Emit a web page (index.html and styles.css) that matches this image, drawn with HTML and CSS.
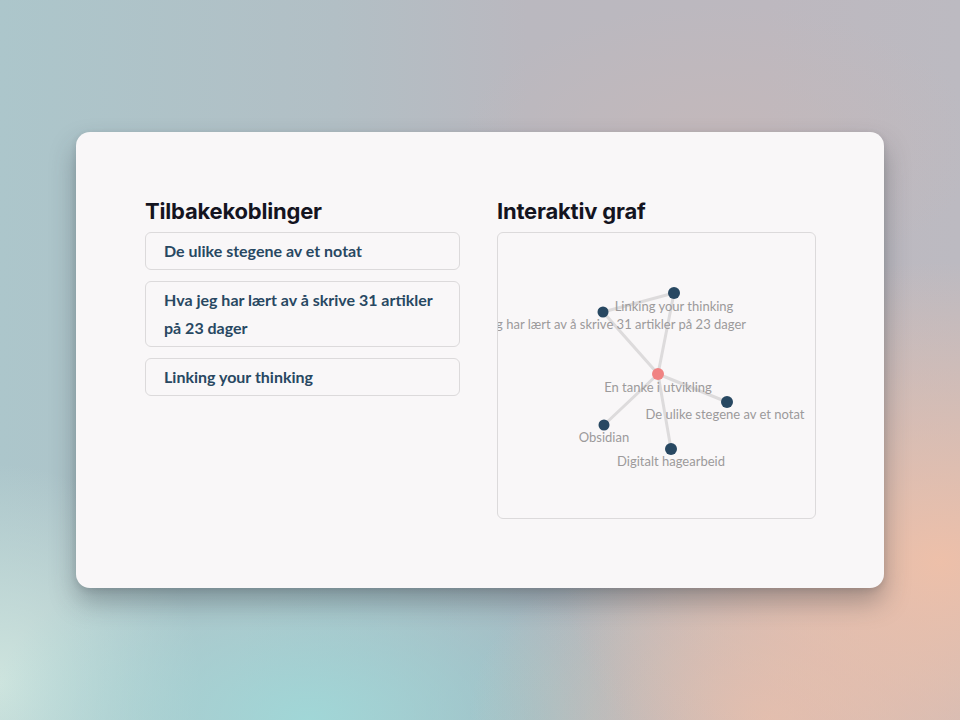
FILE: index.html
```html
<!DOCTYPE html>
<html lang="no">
<head>
<meta charset="utf-8">
<title>Tilbakekoblinger</title>
<link rel="stylesheet" href="styles.css">
</head>
<body>
<div class="stage">
  <div class="card">
    <section class="col">
      <h2 class="title">Tilbakekoblinger</h2>
      <ul class="links">
        <li class="link">De ulike stegene av et notat</li>
        <li class="link">Hva jeg har lært av å skrive 31 artikler på 23 dager</li>
        <li class="link">Linking your thinking</li>
      </ul>
    </section>
    <section class="col">
      <h2 class="title">Interaktiv graf</h2>
      <div class="graph">
        <svg class="graph-svg" width="318" height="286" viewBox="0 0 318 286">
          <g class="edges">
            <line x1="161" y1="142" x2="177" y2="61"/>
            <line x1="161" y1="142" x2="106" y2="80"/>
            <line x1="106" y1="80" x2="177" y2="61"/>
            <line x1="161" y1="142" x2="230" y2="170"/>
            <line x1="161" y1="142" x2="107" y2="193"/>
            <line x1="161" y1="142" x2="174" y2="217"/>
          </g>
          <g class="labels">
            <text x="177" y="79">Linking your thinking</text>
            <text x="106" y="97">Hva jeg har lært av å skrive 31 artikler på 23 dager</text>
            <text x="161" y="160">En tanke i utvikling</text>
            <text x="228" y="187">De ulike stegene av et notat</text>
            <text x="107" y="210">Obsidian</text>
            <text x="174" y="234">Digitalt hagearbeid</text>
          </g>
          <g class="nodes">
            <circle cx="177" cy="61" r="6"/>
            <circle cx="106" cy="80" r="5.5"/>
            <circle cx="230" cy="170" r="6"/>
            <circle cx="107" cy="193" r="5.5"/>
            <circle cx="174" cy="217" r="6"/>
            <circle class="current" cx="161" cy="142" r="6"/>
          </g>
        </svg>
      </div>
    </section>
  </div>
</div>
</body>
</html>
```
FILE: styles.css
```css
html, body {
  margin: 0;
  padding: 0;
  width: 960px;
  height: 720px;
  overflow: hidden;
}

.stage {
  width: 960px;
  height: 720px;
  box-sizing: border-box;
  padding: 132px 76px 0 76px;
  background:
    radial-gradient(ellipse 380px 300px at 98% 78%, rgba(240, 192, 168, 0.95), rgba(240, 192, 168, 0) 100%),
    radial-gradient(ellipse 300px 200px at 80% 100%, rgba(226, 190, 175, 0.9), rgba(226, 190, 175, 0) 100%),
    radial-gradient(ellipse 320px 190px at 32% 100%, rgba(160, 216, 216, 0.95), rgba(160, 216, 216, 0) 100%),
    radial-gradient(ellipse 200px 220px at 0% 95%, rgba(206, 228, 222, 1), rgba(206, 228, 222, 0) 100%),
    radial-gradient(ellipse 300px 260px at 55% 100%, rgba(150, 185, 195, 0.8), rgba(150, 185, 195, 0) 100%),
    radial-gradient(ellipse 260px 140px at 75% 20%, rgba(196, 184, 186, 0.9), rgba(196, 184, 186, 0) 100%),
    linear-gradient(90deg, #acc6cb 0%, #b2bfc5 35%, #bab8bf 55%, #bdb8bf 80%, #bcbac1 100%);
}

.card {
  height: 456px;
  box-sizing: border-box;
  background: #f9f7f8;
  border-radius: 14px;
  box-shadow: 0 14px 26px rgba(40, 50, 60, 0.34), 0 2px 6px rgba(40, 50, 60, 0.14);
  padding: 64px 69px 0 69px;
  display: grid;
  grid-template-columns: 315px 319px;
  column-gap: 37px;
  align-items: start;
}

.col {
  display: flex;
  flex-direction: column;
}

.title {
  margin: 0 0 6px 0;
  font-family: Inter, "Liberation Sans", sans-serif;
  font-weight: 700;
  font-size: 22px;
  line-height: 30px;
  letter-spacing: -0.2px;
  color: #14141f;
}

.links {
  list-style: none;
  margin: 0;
  padding: 0;
  display: flex;
  flex-direction: column;
  gap: 11px;
}

.link {
  border: 1.5px solid #dcdadb;
  border-radius: 6px;
  padding: 4px 18px;
  font-family: Lato, "Open Sans", sans-serif;
  font-weight: 700;
  font-size: 16px;
  line-height: 28px;
  color: #284862;
}

.graph {
  height: 287px;
  box-sizing: border-box;
  border: 1.5px solid #dcdadb;
  border-radius: 6px;
  overflow: hidden;
}

.graph-svg {
  display: block;
  margin: -1.5px 0 0 -1.5px;
}

.edges line {
  stroke: #dddbdc;
  stroke-width: 3;
  stroke-linecap: round;
}

.labels text {
  font-family: Lato, "Open Sans", sans-serif;
  font-size: 13px;
  fill: #9c9a9b;
  text-anchor: middle;
}

.nodes circle {
  fill: #284862;
}

.nodes circle.current {
  fill: #f08383;
}
```
